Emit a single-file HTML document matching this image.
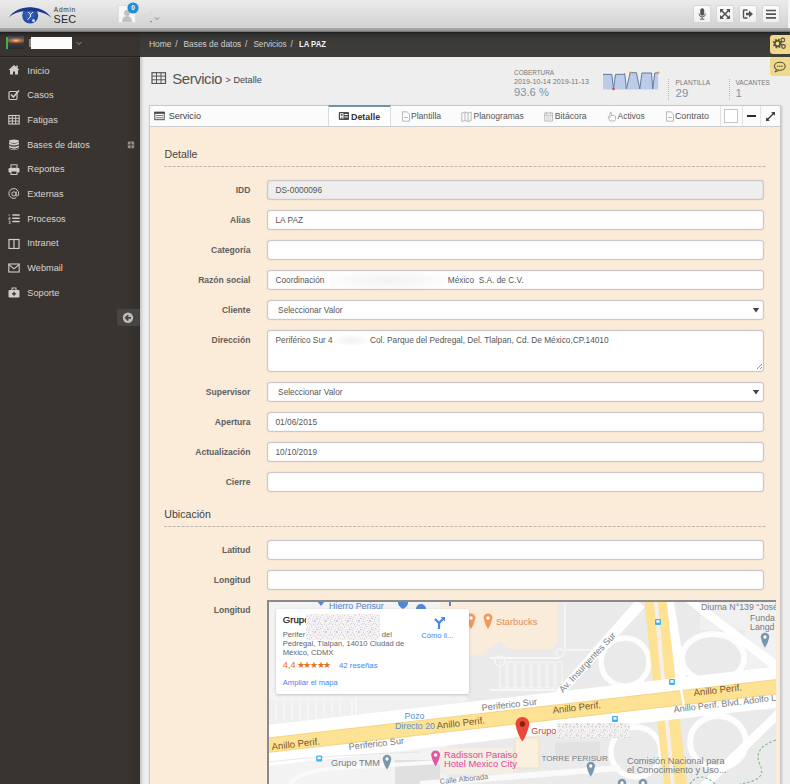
<!DOCTYPE html>
<html><head><meta charset="utf-8"><style>
*{box-sizing:border-box;margin:0;padding:0}
html,body{width:790px;height:784px;overflow:hidden;background:#ededed;font-family:"Liberation Sans",sans-serif;color:#555}
.a{position:absolute}
.t{position:absolute;white-space:pre}
</style></head><body>
<div class="a" style="left:140px;top:57px;width:650px;height:727px;background:#eeeeee"></div>
<div class="a" style="left:140px;top:57px;width:5px;height:727px;background:linear-gradient(to right,#c4c4c4,#e6e6e6 60%,#eeeeee)"></div>
<div class="a" style="left:0px;top:0px;width:790px;height:28px;background:linear-gradient(#ebebeb,#d1d1d1)"></div>
<div class="a" style="left:0px;top:28px;width:790px;height:4px;background:linear-gradient(#acacac,#979797 60%,#6a6a6a)"></div>
<svg class="a" style="left:5px;top:3px;" width="50" height="23" viewBox="0 0 50 23"><defs><radialGradient id="eg" cx="0.45" cy="0.4" r="0.6"><stop offset="0" stop-color="#3a6cc4"/><stop offset="1" stop-color="#1c42a0"/></radialGradient></defs><circle cx="25.2" cy="12.5" r="8" fill="url(#eg)"/><path d="M3.5 15 C12 0.5, 38 0.5, 46.7 15.3 C38 5.2, 12 5.2, 3.5 15Z" fill="#1b3a8e"/><path d="M23.5 9 l2 2.5 l2.5 -2.5 M25.5 11 v3 M25 14 l-2.5 3" stroke="#e6ecf7" stroke-width="1" fill="none"/><circle cx="28.5" cy="17.5" r="1.5" fill="#cfd9ee"/></svg>
<div class="t" style="left:53.80px;top:7.20px;font-size:6.5px;line-height:6.5px;color:#333;letter-spacing:0.75px">Admin</div>
<div class="t" style="left:53.50px;top:13.66px;font-size:10.8px;line-height:10.8px;color:#2a2a2a;letter-spacing:0.2px">SEC</div>
<div class="a" style="left:118px;top:5px;width:18px;height:18px;background:#f6f6f6;border:1px solid #dedede"></div>
<svg class="a" style="left:119px;top:6px;" width="16" height="16" viewBox="0 0 16 16"><circle cx="8" cy="7" r="3" fill="#c9bfba"/><path d="M3 16 Q3 10 8 10 Q13 10 13 16Z" fill="#c9bfba"/></svg>
<svg class="a" style="left:127px;top:2px;" width="12" height="12" viewBox="0 0 12 12"><circle cx="6" cy="6" r="5.6" fill="#1c8fd9"/><text x="6" y="8.3" font-size="6.5" font-weight="bold" text-anchor="middle" fill="#fff" font-family="Liberation Sans">0</text></svg>
<svg class="a" style="left:146px;top:5px;" width="16" height="20" viewBox="0 0 16 20"><circle cx="5" cy="16.5" r="0.7" fill="#666"/><path d="M9 12.5 l2 2 l2 -2" stroke="#777" stroke-width="1" fill="none"/><circle cx="5" cy="6" r="0.5" fill="#bbb"/><circle cx="5" cy="9" r="0.5" fill="#bbb"/></svg>
<div class="a" style="left:693px;top:5px;width:18px;height:18px;background:linear-gradient(#fbfbfb,#efefef);border:1px solid #d6d6d6;border-radius:2px"></div>
<div class="a" style="left:716px;top:5px;width:18px;height:18px;background:linear-gradient(#fbfbfb,#efefef);border:1px solid #d6d6d6;border-radius:2px"></div>
<div class="a" style="left:739px;top:5px;width:18px;height:18px;background:linear-gradient(#fbfbfb,#efefef);border:1px solid #d6d6d6;border-radius:2px"></div>
<div class="a" style="left:762px;top:5px;width:18px;height:18px;background:linear-gradient(#fbfbfb,#efefef);border:1px solid #d6d6d6;border-radius:2px"></div>
<svg class="a" style="left:693px;top:5px;" width="18" height="18" viewBox="0 0 18 18"><rect x="7.2" y="3.2" width="4" height="7.5" rx="2" fill="#555"/><path d="M6 8.5 Q6 12 9.2 12 Q12.4 12 12.4 8.5" stroke="#555" stroke-width="0.9" fill="none"/><path d="M9.2 12 v2 M7 14.2 h4.4" stroke="#555" stroke-width="0.9"/></svg>
<svg class="a" style="left:716px;top:5px;" width="18" height="18" viewBox="0 0 18 18"><g stroke="#555" stroke-width="1.6" fill="none"><path d="M5 5 L13 13 M13 5 L5 13"/></g><g fill="#555"><path d="M4 4 h4 l-4 4z M14 4 v4 l-4 -4z M4 14 v-4 l4 4z M14 14 h-4 l4 -4z"/></g></svg>
<svg class="a" style="left:739px;top:5px;" width="18" height="18" viewBox="0 0 18 18"><path d="M8.5 5 H5.2 Q4.5 5 4.5 5.7 V12.3 Q4.5 13 5.2 13 H8.5" stroke="#555" stroke-width="1.4" fill="none"/><path d="M7 7.8 H10 V5.6 L14 9 L10 12.4 V10.2 H7Z" fill="#555"/></svg>
<svg class="a" style="left:762px;top:5px;" width="18" height="18" viewBox="0 0 18 18"><g stroke="#555" stroke-width="1.7"><path d="M4 5.5 H14 M4 9.2 H14 M4 12.9 H14"/></g></svg>
<div class="a" style="left:788px;top:0px;width:2px;height:28px;background:#f4f4f4"></div>
<div class="a" style="left:0px;top:32px;width:140px;height:752px;background:#39342f"></div>
<div class="a" style="left:126px;top:57px;width:14px;height:727px;background:linear-gradient(to right,rgba(0,0,0,0),rgba(0,0,0,.10))"></div>
<div class="a" style="left:0px;top:32px;width:140px;height:25px;background:linear-gradient(#1e1c1b,#2f2b29 8%,#39342f 30%)"></div>
<div class="a" style="left:0px;top:56px;width:140px;height:1px;background:#242120"></div>
<div class="a" style="left:0px;top:57px;width:140px;height:1px;background:#3f3a37"></div>
<div class="a" style="left:6px;top:37px;width:2px;height:12px;background:#3cb340"></div>
<div class="a" style="left:8px;top:36px;width:16px;height:13px;background:radial-gradient(ellipse 9px 3px at 50% 35%,#ffd080,#d07a40 40%,rgba(60,60,70,0) 100%),linear-gradient(#3d4252,#6a5a58 35%,#3a3a40 60%,#2a2a2e)"></div>
<div class="a" style="left:31px;top:37px;width:41px;height:11.5px;background:#fcfcfc"></div>
<div class="a" style="left:29px;top:39px;width:2px;height:8px;background:#8a8684"></div>
<svg class="a" style="left:75px;top:39px;" width="8" height="8" viewBox="0 0 8 8"><path d="M1.5 3 l2.5 2.5 l2.5 -2.5" stroke="#9a9592" stroke-width="1" fill="none"/></svg>
<div class="t" style="left:27.30px;top:65.66px;font-size:9.5px;line-height:9.5px;color:#d9d5d1">Inicio</div>
<div class="t" style="left:27.30px;top:90.63px;font-size:9.3px;line-height:9.3px;color:#d9d5d1">Casos</div>
<div class="t" style="left:27.30px;top:115.63px;font-size:9.3px;line-height:9.3px;color:#d9d5d1">Fatigas</div>
<div class="t" style="left:27.30px;top:140.64px;font-size:9.05px;line-height:9.05px;color:#d9d5d1">Bases de datos</div>
<div class="t" style="left:27.30px;top:165.31px;font-size:9.2px;line-height:9.2px;color:#d9d5d1">Reportes</div>
<div class="t" style="left:27.30px;top:189.81px;font-size:9.2px;line-height:9.2px;color:#d9d5d1">Externas</div>
<div class="t" style="left:27.30px;top:214.51px;font-size:9.2px;line-height:9.2px;color:#d9d5d1">Procesos</div>
<div class="t" style="left:27.30px;top:239.31px;font-size:9.2px;line-height:9.2px;color:#d9d5d1">Intranet</div>
<div class="t" style="left:27.30px;top:263.71px;font-size:9.2px;line-height:9.2px;color:#d9d5d1">Webmail</div>
<div class="t" style="left:27.30px;top:288.51px;font-size:9.2px;line-height:9.2px;color:#d9d5d1">Soporte</div>
<svg class="a" style="left:8px;top:64.2px;" width="12" height="11" viewBox="0 0 12 11"><path d="M6 1 L0.5 6 H2 V10.5 H5 V7.5 H7 V10.5 H10 V6 H11.5Z" fill="#d0ccc8"/><rect x="8.3" y="1.5" width="1.5" height="3" fill="#d0ccc8"/></svg>
<svg class="a" style="left:8px;top:89px;" width="12" height="11" viewBox="0 0 12 11"><rect x="1" y="2.5" width="8" height="8" rx="1.2" stroke="#d0ccc8" stroke-width="1.2" fill="none"/><path d="M3 5.5 L5.3 8 L11 1.5" stroke="#d0ccc8" stroke-width="1.6" fill="none"/></svg>
<svg class="a" style="left:8px;top:114px;" width="12" height="11" viewBox="0 0 12 11"><rect x="0.8" y="1.5" width="10.4" height="8.5" stroke="#d0ccc8" stroke-width="1.1" fill="none"/><path d="M0.8 4.3 H11.2 M0.8 7.1 H11.2 M4.3 1.5 V10 M7.7 1.5 V10" stroke="#d0ccc8" stroke-width="1"/></svg>
<svg class="a" style="left:8px;top:138.8px;" width="12" height="11" viewBox="0 0 12 11"><ellipse cx="6" cy="2.2" rx="5" ry="1.8" fill="#d0ccc8"/><path d="M1 3.3 Q6 6 11 3.3 V5.2 Q6 7.9 1 5.2Z M1 6.4 Q6 9.1 11 6.4 V8.3 Q6 11 1 8.3Z" fill="#d0ccc8"/><path d="M1 9.2 Q6 12 11 9.2 V9.8 Q6 12.4 1 9.8Z" fill="#d0ccc8"/></svg>
<svg class="a" style="left:8px;top:163.6px;" width="12" height="11" viewBox="0 0 12 11"><rect x="3" y="0.8" width="6" height="3.5" stroke="#d0ccc8" stroke-width="1" fill="none"/><rect x="0.5" y="4" width="11" height="4.5" rx="1" fill="#d0ccc8"/><rect x="3" y="7" width="6" height="3.5" fill="#37322f" stroke="#d0ccc8" stroke-width="1"/></svg>
<svg class="a" style="left:8px;top:188.1px;" width="12" height="11" viewBox="0 0 12 11"><path d="M8.2 9.6 Q6.8 10.4 5.8 10.4 A4.9 4.9 0 1 1 10.7 5.5 Q10.7 8 9 8 Q7.9 8 8 6.8 L8.3 3.6" stroke="#d0ccc8" stroke-width="1" fill="none"/><circle cx="5.9" cy="5.9" r="2.1" stroke="#d0ccc8" stroke-width="1" fill="none"/></svg>
<svg class="a" style="left:8px;top:212.8px;" width="12" height="11" viewBox="0 0 12 11"><path d="M4.3 2 H11.7 M4.3 5.3 H11.7 M4.3 8.6 H11.7" stroke="#d0ccc8" stroke-width="1.5"/><path d="M1.2 1 V3 M0.7 4.6 H2.2 V5.5 H0.7 V6.5 H2.2 M0.7 8 H2.2 V10.5 H0.7 M0.7 9.2 H2.2" stroke="#d0ccc8" stroke-width="0.6" fill="none"/></svg>
<svg class="a" style="left:8px;top:237.6px;" width="12" height="11" viewBox="0 0 12 11"><rect x="1" y="1.5" width="10" height="9" stroke="#d0ccc8" stroke-width="1.2" fill="none"/><path d="M6 1.5 V10.5" stroke="#d0ccc8" stroke-width="1.2"/></svg>
<svg class="a" style="left:8px;top:262px;" width="12" height="11" viewBox="0 0 12 11"><rect x="0.8" y="2" width="10.4" height="8" stroke="#d0ccc8" stroke-width="1.1" fill="none"/><path d="M0.8 2.5 L6 6.8 L11.2 2.5" stroke="#d0ccc8" stroke-width="1.1" fill="none"/></svg>
<svg class="a" style="left:8px;top:286.8px;" width="12" height="11" viewBox="0 0 12 11"><rect x="0.5" y="3" width="11" height="7.5" rx="1" fill="#d0ccc8"/><rect x="4" y="1" width="4" height="2.5" stroke="#d0ccc8" stroke-width="1" fill="none"/><path d="M6 4.8 V8.8 M4 6.8 H8" stroke="#37322f" stroke-width="1.3"/></svg>
<svg class="a" style="left:127px;top:141px;" width="8" height="8" viewBox="0 0 8 8"><rect x="0.8" y="0.6" width="6.4" height="6.6" rx="1.2" fill="#95908b"/><path d="M4 1 V7 M1 3.9 H7" stroke="#3a3531" stroke-width="0.9"/></svg>
<div class="a" style="left:117px;top:309px;width:23px;height:17px;background:#464544;border-radius:2px 0 0 2px"></div>
<svg class="a" style="left:121px;top:311px;" width="14" height="14" viewBox="0 0 14 14"><circle cx="7" cy="6.8" r="5.2" fill="#bdbcbb"/><path d="M10 6.8 H4.8 M7.3 4.3 L4.7 6.8 L7.3 9.3" stroke="#464544" stroke-width="1.7" fill="none"/></svg>
<div class="a" style="left:140px;top:32px;width:650px;height:25px;background:linear-gradient(#1f1f1f,#2f2f2f 8%,#3b3a39 30%,#3f3e3d)"></div>
<div class="t" style="left:148.90px;top:40.00px;font-size:8.5px;line-height:8.5px;color:#cfcfcf">Home</div>
<div class="t" style="left:175.20px;top:40.00px;font-size:8.5px;line-height:8.5px;color:#cfcfcf">/</div>
<div class="t" style="left:183.50px;top:40.11px;font-size:8.38px;line-height:8.38px;color:#cfcfcf">Bases de datos</div>
<div class="t" style="left:245.00px;top:40.00px;font-size:8.5px;line-height:8.5px;color:#cfcfcf">/</div>
<div class="t" style="left:253.40px;top:40.63px;font-size:8.23px;line-height:8.23px;color:#cfcfcf">Servicios</div>
<div class="t" style="left:290.50px;top:40.00px;font-size:8.5px;line-height:8.5px;color:#cfcfcf">/</div>
<div class="t" style="left:299.00px;top:39.44px;font-size:9.4px;line-height:9.4px;color:#f4f4f4;font-weight:bold;transform:scaleX(0.82);transform-origin:0 0">LA PAZ</div>
<div class="a" style="left:770px;top:35px;width:21px;height:19px;background:#efd98a;border-radius:3px 0 0 3px"></div>
<svg class="a" style="left:770px;top:35px;" width="20" height="19" viewBox="0 0 20 19"><circle cx="7.5" cy="8.5" r="3.3" stroke="#55534d" stroke-width="2.8" stroke-dasharray="1.5 1.1" fill="none"/><circle cx="7.5" cy="8.5" r="2.7" stroke="#55534d" stroke-width="1.6" fill="none"/><circle cx="12.8" cy="5" r="1.8" stroke="#55534d" stroke-width="1.2" fill="none"/><circle cx="13.5" cy="11.5" r="1.8" stroke="#55534d" stroke-width="1.2" fill="none"/></svg>
<div class="a" style="left:770px;top:57px;width:21px;height:19px;background:#efd98a;border-radius:3px 0 0 3px"></div>
<svg class="a" style="left:770px;top:57px;" width="20" height="19" viewBox="0 0 20 19"><ellipse cx="9.8" cy="9.3" rx="5.4" ry="4" stroke="#4f5048" stroke-width="1.1" fill="none"/><path d="M6.6 12.4 L5 15 L9 13.3" stroke="#4f5048" stroke-width="1" fill="#efd98a"/><circle cx="7.7" cy="9.3" r="0.75" fill="#4f5048"/><circle cx="9.8" cy="9.3" r="0.75" fill="#4f5048"/><circle cx="11.9" cy="9.3" r="0.75" fill="#4f5048"/></svg>
<svg class="a" style="left:151px;top:72px;" width="16" height="12" viewBox="0 0 16 12"><rect x="1" y="0.7" width="13.5" height="10.8" stroke="#555" stroke-width="1.2" fill="none"/><path d="M1 4.1 H14.5 M1 7.8 H14.5 M5.5 0.7 V11.5 M10 0.7 V11.5" stroke="#555" stroke-width="1"/></svg>
<div class="t" style="left:172.20px;top:70.90px;font-size:15px;line-height:15px;color:#555;letter-spacing:-0.45px">Servicio</div>
<div class="t" style="left:225.60px;top:75.70px;font-size:9.1px;line-height:9.1px;color:#444">&gt; Detalle</div>
<div class="t" style="left:514.10px;top:70.38px;font-size:6.4px;line-height:6.4px;color:#777">COBERTURA</div>
<div class="t" style="left:514.10px;top:78.82px;font-size:7.18px;line-height:7.18px;color:#777">2019-10-14 2019-11-13</div>
<div class="t" style="left:514.00px;top:87.29px;font-size:11.24px;line-height:11.24px;color:#7d93aa">93.6 %</div>
<svg class="a" style="left:598px;top:66px;" width="66" height="28" viewBox="0 0 66 28"><polygon points="5.0,8.4 13.8,8.4 15.5,23.0 17.5,8.4 25.0,8.4 26.7,7.5 28.4,23.0 32.2,6.7 38.4,6.7 41.8,23.0 43.9,7.0 53.5,7.0 54.7,23.0 56.8,7.0 60.2,6.7 60.2,23.4 5.0,23.4" fill="#bccbea"/><polyline points="5.0,8.4 13.8,8.4 15.5,23.0 17.5,8.4 25.0,8.4 26.7,7.5 28.4,23.0 32.2,6.7 38.4,6.7 41.8,23.0 43.9,7.0 53.5,7.0 54.7,23.0 56.8,7.0 60.2,6.7" stroke="#5d7f98" stroke-width="1" fill="none"/><circle cx="15.5" cy="23" r="1.2" fill="#e8343a"/><circle cx="32.200000000000045" cy="6.700000000000003" r="1.2" fill="#f29a2e"/><circle cx="60.200000000000045" cy="6.700000000000003" r="1.2" fill="#f29a2e"/></svg>
<div class="a" style="left:668px;top:79px;width:0;height:21px;border-left:1px dotted #b8b8b8"></div>
<div class="a" style="left:729px;top:79px;width:0;height:21px;border-left:1px dotted #b8b8b8"></div>
<div class="t" style="left:675.60px;top:80.06px;font-size:6.55px;line-height:6.55px;color:#777">PLANTILLA</div>
<div class="t" style="left:675.60px;top:88.15px;font-size:11.4px;line-height:11.4px;color:#7d93aa">29</div>
<div class="t" style="left:735.40px;top:80.12px;font-size:6.47px;line-height:6.47px;color:#777">VACANTES</div>
<div class="t" style="left:735.40px;top:88.15px;font-size:11.4px;line-height:11.4px;color:#7d93aa">1</div>
<div class="a" style="left:149px;top:105px;width:632px;height:690px;background:#fbebd9;border:1px solid #c9c9c9;box-shadow:1px 1px 2px rgba(0,0,0,.18)"></div>
<div class="a" style="left:150px;top:106px;width:630px;height:21px;background:#fbfbfb;border-bottom:1px solid #cdcdcd"></div>
<svg class="a" style="left:153px;top:111px;" width="12" height="10" viewBox="0 0 12 10"><rect x="1.8" y="1.3" width="9.4" height="7.4" stroke="#505050" stroke-width="1" fill="none"/><rect x="1.3" y="0.8" width="10.4" height="2" fill="#444"/><path d="M3 4.6 H10 M3 6.8 H10" stroke="#666" stroke-width="0.9"/></svg>
<div class="t" style="left:168.70px;top:111.51px;font-size:9.08px;line-height:9.08px;color:#444">Servicio</div>
<div class="a" style="left:328px;top:105px;width:63px;height:21px;background:#fff;border-left:1px solid #dadada;border-right:1px solid #dadada;border-top:2px solid #7194a6"></div>
<svg class="a" style="left:338px;top:111px;" width="12" height="10" viewBox="0 0 12 10"><rect x="0.8" y="1" width="10.2" height="8" rx="0.8" fill="#4a4a4a"/><rect x="2" y="2.3" width="3.5" height="5.4" fill="#fff"/><rect x="6.5" y="3" width="3.3" height="1" fill="#fff"/><rect x="6.5" y="5.4" width="3.3" height="1" fill="#fff"/><circle cx="3.75" cy="4" r="1" fill="#4a4a4a"/><path d="M2.3 7.5 Q3.75 4.8 5.2 7.5Z" fill="#4a4a4a"/></svg>
<div class="t" style="left:351.00px;top:112.59px;font-size:8.87px;line-height:8.87px;color:#333;font-weight:bold">Detalle</div>
<svg class="a" style="left:400.5px;top:110.5px;" width="10" height="11" viewBox="0 0 10 11"><path d="M1.5 0.8 H6 L8.5 3.3 V10.2 H1.5Z" stroke="#aaa" stroke-width="0.8" fill="none"/><path d="M3 6.5 H7" stroke="#aaa" stroke-width="0.8"/></svg>
<div class="t" style="left:410.90px;top:112.28px;font-size:8.65px;line-height:8.65px;color:#555">Plantilla</div>
<svg class="a" style="left:460.5px;top:110.5px;" width="12" height="11" viewBox="0 0 12 11"><path d="M0.8 2 L4 1 L7 2 L10.2 1 V9.5 L7 10.5 L4 9.5 L0.8 10.5Z" stroke="#aaa" stroke-width="0.8" fill="none"/><path d="M4 1 V9.5 M7 2 V10.5" stroke="#aaa" stroke-width="0.8"/></svg>
<div class="t" style="left:473.50px;top:112.37px;font-size:8.54px;line-height:8.54px;color:#555">Planogramas</div>
<svg class="a" style="left:544px;top:110.5px;" width="10" height="11" viewBox="0 0 10 11"><rect x="0.8" y="2" width="7.6" height="8" stroke="#aaa" stroke-width="0.8" fill="none"/><path d="M0.8 4.2 H8.4 M2.7 0.8 V2.8 M6.5 0.8 V2.8" stroke="#aaa" stroke-width="0.8"/><path d="M2 6 H7.4 M2 8 H7.4" stroke="#aaa" stroke-width="0.6"/></svg>
<div class="t" style="left:554.80px;top:112.24px;font-size:8.7px;line-height:8.7px;color:#555">Bitácora</div>
<svg class="a" style="left:606.5px;top:110.5px;" width="10" height="11" viewBox="0 0 10 11"><path d="M3 10 L1 6 Q1.2 5 2.3 5.8 L3 6.6 V1.5 Q3.8 0.7 4.5 1.5 V4.5 H7.5 Q8.5 4.7 8.5 6 V8.5 L7.5 10Z" stroke="#aaa" stroke-width="0.8" fill="none"/></svg>
<div class="t" style="left:617.50px;top:112.43px;font-size:8.47px;line-height:8.47px;color:#555">Activos</div>
<svg class="a" style="left:664.5px;top:110.5px;" width="10" height="11" viewBox="0 0 10 11"><path d="M1.5 0.8 H6 L8.5 3.3 V10.2 H1.5Z" stroke="#aaa" stroke-width="0.8" fill="none"/><path d="M3 6.5 H7" stroke="#aaa" stroke-width="0.8"/></svg>
<div class="t" style="left:674.90px;top:112.07px;font-size:8.89px;line-height:8.89px;color:#555">Contrato</div>
<div class="a" style="left:719.5px;top:106px;width:1px;height:20px;background:#e3e3e3"></div>
<div class="a" style="left:741.5px;top:106px;width:1px;height:20px;background:#e3e3e3"></div>
<div class="a" style="left:760px;top:106px;width:1px;height:20px;background:#e3e3e3"></div>
<div class="a" style="left:723.5px;top:109px;width:14px;height:14px;background:#fff;border:1px solid #c6c6c6"></div>
<div class="a" style="left:747px;top:114.5px;width:9px;height:2.2px;background:#2b2b2b"></div>
<svg class="a" style="left:764px;top:110px;" width="13" height="13" viewBox="0 0 13 13"><path d="M3 10 L10 3" stroke="#333" stroke-width="1.2"/><path d="M2 11 L2.3 7.2 L5.8 10.7Z M11 2 L10.7 5.8 L7.2 2.3Z" fill="#333"/></svg>
<div class="t" style="left:164.50px;top:148.85px;font-size:10.57px;line-height:10.57px;color:#444">Detalle</div>
<svg class="a" style="left:164px;top:166px;" width="602" height="1" viewBox="0 0 602 1"><path d="M0 0.5 H602" stroke="#c2b6aa" stroke-width="1" stroke-dasharray="3 1.4"/></svg>
<div class="t" style="left:-49.60px;width:300px;text-align:right;top:185.96px;font-size:8.55px;line-height:8.55px;color:#606060;font-weight:bold">IDD</div>
<div class="a" style="left:267px;top:180px;width:497px;height:20px;background:#eeeeee;border:1px solid #c9c9c9;border-radius:3px;box-shadow:inset 0 0 2px rgba(0,0,0,.13),0 0 1.5px rgba(0,0,0,.12)"></div>
<div class="t" style="left:275.50px;top:185.97px;font-size:8.3px;line-height:8.3px;color:#555">DS-0000096</div>
<div class="t" style="left:-49.60px;width:300px;text-align:right;top:215.96px;font-size:8.55px;line-height:8.55px;color:#606060;font-weight:bold">Alias</div>
<div class="a" style="left:267px;top:210px;width:497px;height:20px;background:#fff;border:1px solid #c9c9c9;border-radius:3px;box-shadow:inset 0 0 2px rgba(0,0,0,.13),0 0 1.5px rgba(0,0,0,.12)"></div>
<div class="t" style="left:275.50px;top:215.97px;font-size:8.3px;line-height:8.3px;color:#555">LA PAZ</div>
<div class="t" style="left:-49.60px;width:300px;text-align:right;top:245.96px;font-size:8.55px;line-height:8.55px;color:#606060;font-weight:bold">Categoría</div>
<div class="a" style="left:267px;top:240px;width:497px;height:20px;background:#fff;border:1px solid #c9c9c9;border-radius:3px;box-shadow:inset 0 0 2px rgba(0,0,0,.13),0 0 1.5px rgba(0,0,0,.12)"></div>
<div class="t" style="left:-49.60px;width:300px;text-align:right;top:275.96px;font-size:8.55px;line-height:8.55px;color:#606060;font-weight:bold">Razón social</div>
<div class="a" style="left:267px;top:270px;width:497px;height:20px;background:#fff;border:1px solid #c9c9c9;border-radius:3px;box-shadow:inset 0 0 2px rgba(0,0,0,.13),0 0 1.5px rgba(0,0,0,.12)"></div>
<div class="t" style="left:275.50px;top:275.97px;font-size:8.3px;line-height:8.3px;color:#555">Coordinación</div>
<div class="t" style="left:-49.60px;width:300px;text-align:right;top:305.96px;font-size:8.55px;line-height:8.55px;color:#606060;font-weight:bold">Cliente</div>
<div class="a" style="left:267px;top:300px;width:497px;height:20px;background:#fff;border:1px solid #c9c9c9;border-radius:3px;box-shadow:inset 0 0 2px rgba(0,0,0,.13),0 0 1.5px rgba(0,0,0,.12)"></div>
<div class="t" style="left:278.10px;top:305.97px;font-size:8.3px;line-height:8.3px;color:#555">Seleccionar Valor</div>
<svg class="a" style="left:752px;top:306px;" width="8" height="8" viewBox="0 0 8 8"><path d="M0.8 2 H7.2 L4 6.5Z" fill="#444"/></svg>
<div class="t" style="left:-49.60px;width:300px;text-align:right;top:335.56px;font-size:8.55px;line-height:8.55px;color:#606060;font-weight:bold">Dirección</div>
<div class="a" style="left:267px;top:329.5px;width:497px;height:42.5px;background:#fff;border:1px solid #c9c9c9;border-radius:3px;box-shadow:inset 0 0 2px rgba(0,0,0,.13),0 0 1.5px rgba(0,0,0,.12)"></div>
<div class="t" style="left:275.50px;top:335.87px;font-size:8.3px;line-height:8.3px;color:#555">Periférico Sur 4</div>
<div class="t" style="left:370.00px;top:335.87px;font-size:8.3px;line-height:8.3px;color:#555">Col. Parque del Pedregal, Del. Tlalpan, Cd. De México,CP.14010</div>
<svg class="a" style="left:755px;top:362px;" width="8" height="8" viewBox="0 0 8 8"><path d="M7 2 L2 7 M7 5 L5 7" stroke="#777" stroke-width="0.8"/></svg>
<div class="t" style="left:447.80px;top:276.07px;font-size:8.3px;line-height:8.3px;color:#555">México  S.A. de C.V.</div>
<div class="a" style="left:330px;top:272px;width:117px;height:17px;background:radial-gradient(ellipse at 50% 50%,rgba(200,190,195,.22),rgba(220,215,215,.08) 70%,rgba(255,255,255,0))"></div>
<div class="a" style="left:333px;top:335px;width:37px;height:11px;background:radial-gradient(ellipse at 50% 50%,rgba(200,190,195,.25),rgba(255,255,255,0) 75%)"></div>
<div class="t" style="left:-49.60px;width:300px;text-align:right;top:387.96px;font-size:8.55px;line-height:8.55px;color:#606060;font-weight:bold">Supervisor</div>
<div class="a" style="left:267px;top:382px;width:497px;height:20px;background:#fff;border:1px solid #c9c9c9;border-radius:3px;box-shadow:inset 0 0 2px rgba(0,0,0,.13),0 0 1.5px rgba(0,0,0,.12)"></div>
<div class="t" style="left:278.10px;top:387.97px;font-size:8.3px;line-height:8.3px;color:#555">Seleccionar Valor</div>
<svg class="a" style="left:752px;top:388px;" width="8" height="8" viewBox="0 0 8 8"><path d="M0.8 2 H7.2 L4 6.5Z" fill="#444"/></svg>
<div class="t" style="left:-49.60px;width:300px;text-align:right;top:417.76px;font-size:8.55px;line-height:8.55px;color:#606060;font-weight:bold">Apertura</div>
<div class="a" style="left:267px;top:411.8px;width:497px;height:20px;background:#fff;border:1px solid #c9c9c9;border-radius:3px;box-shadow:inset 0 0 2px rgba(0,0,0,.13),0 0 1.5px rgba(0,0,0,.12)"></div>
<div class="t" style="left:275.50px;top:417.77px;font-size:8.3px;line-height:8.3px;color:#555">01/06/2015</div>
<div class="t" style="left:-49.60px;width:300px;text-align:right;top:447.76px;font-size:8.55px;line-height:8.55px;color:#606060;font-weight:bold">Actualización</div>
<div class="a" style="left:267px;top:441.8px;width:497px;height:20px;background:#fff;border:1px solid #c9c9c9;border-radius:3px;box-shadow:inset 0 0 2px rgba(0,0,0,.13),0 0 1.5px rgba(0,0,0,.12)"></div>
<div class="t" style="left:275.50px;top:447.77px;font-size:8.3px;line-height:8.3px;color:#555">10/10/2019</div>
<div class="t" style="left:-49.60px;width:300px;text-align:right;top:477.96px;font-size:8.55px;line-height:8.55px;color:#606060;font-weight:bold">Cierre</div>
<div class="a" style="left:267px;top:472px;width:497px;height:20px;background:#fff;border:1px solid #c9c9c9;border-radius:3px;box-shadow:inset 0 0 2px rgba(0,0,0,.13),0 0 1.5px rgba(0,0,0,.12)"></div>
<div class="t" style="left:164.30px;top:509.03px;font-size:10.6px;line-height:10.6px;color:#444">Ubicación</div>
<svg class="a" style="left:164px;top:526px;" width="602" height="1" viewBox="0 0 602 1"><path d="M0 0.5 H602" stroke="#c2b6aa" stroke-width="1" stroke-dasharray="3 1.4"/></svg>
<div class="t" style="left:-49.60px;width:300px;text-align:right;top:546.16px;font-size:8.55px;line-height:8.55px;color:#606060;font-weight:bold">Latitud</div>
<div class="a" style="left:267px;top:540.2px;width:497px;height:20px;background:#fff;border:1px solid #c9c9c9;border-radius:3px;box-shadow:inset 0 0 2px rgba(0,0,0,.13),0 0 1.5px rgba(0,0,0,.12)"></div>
<div class="t" style="left:-49.60px;width:300px;text-align:right;top:575.96px;font-size:8.55px;line-height:8.55px;color:#606060;font-weight:bold">Longitud</div>
<div class="a" style="left:267px;top:570px;width:497px;height:20px;background:#fff;border:1px solid #c9c9c9;border-radius:3px;box-shadow:inset 0 0 2px rgba(0,0,0,.13),0 0 1.5px rgba(0,0,0,.12)"></div>
<div class="t" style="left:-49.60px;width:300px;text-align:right;top:605.76px;font-size:8.55px;line-height:8.55px;color:#606060;font-weight:bold">Longitud</div>
<svg class="a" style="left:267px;top:600px" width="509" height="184" viewBox="267 600 509 184"><rect x="267" y="600" width="509" height="184" fill="#eaeaea"/><rect x="267" y="694" width="200" height="40" fill="#f0f0f0"/><rect x="267" y="745" width="180" height="39" fill="#f3f3f3"/><rect x="267" y="600" width="200" height="100" fill="#f3f3f3"/><rect x="745" y="600" width="31" height="110" fill="#f1f1f1"/><rect x="700" y="600" width="50" height="30" fill="#f0f0f0"/><polygon points="440.0,600.0 557.0,600.0 557.0,643.0 552.0,649.0 508.0,649.0 500.0,641.0 482.0,655.0 440.0,657.0" fill="#faecdb" /><rect x="500" y="662" width="6" height="26" rx="1" fill="none" stroke="#f6f6f6" stroke-width="1.2"/><rect x="508" y="662" width="6" height="26" rx="1" fill="none" stroke="#f6f6f6" stroke-width="1.2"/><rect x="516" y="662" width="6" height="26" rx="1" fill="none" stroke="#f6f6f6" stroke-width="1.2"/><rect x="524" y="662" width="6" height="26" rx="1" fill="none" stroke="#f6f6f6" stroke-width="1.2"/><rect x="532" y="662" width="6" height="26" rx="1" fill="none" stroke="#f6f6f6" stroke-width="1.2"/><rect x="540" y="662" width="6" height="26" rx="1" fill="none" stroke="#f6f6f6" stroke-width="1.2"/><rect x="548" y="662" width="6" height="26" rx="1" fill="none" stroke="#f6f6f6" stroke-width="1.2"/><rect x="556" y="662" width="6" height="26" rx="1" fill="none" stroke="#f6f6f6" stroke-width="1.2"/><path d="M490 658 H560 M490 690 H555" stroke="#f7f7f7" stroke-width="2" fill="none"/><circle cx="500" cy="661" r="5" fill="none" stroke="#f5f5f5" stroke-width="1.5"/><circle cx="560" cy="653" r="4" fill="none" stroke="#f5f5f5" stroke-width="1.5"/><path d="M565 600 V650 H600" stroke="#f6f6f6" stroke-width="1.5" fill="none"/><path d="M276 696 V720" stroke="#f6f6f6" stroke-width="1.3"/><path d="M284 696 V720" stroke="#f6f6f6" stroke-width="1.3"/><path d="M292 696 V720" stroke="#f6f6f6" stroke-width="1.3"/><path d="M300 696 V720" stroke="#f6f6f6" stroke-width="1.3"/><path d="M308 696 V720" stroke="#f6f6f6" stroke-width="1.3"/><path d="M316 696 V720" stroke="#f6f6f6" stroke-width="1.3"/><path d="M324 696 V720" stroke="#f6f6f6" stroke-width="1.3"/><path d="M332 696 V720" stroke="#f6f6f6" stroke-width="1.3"/><path d="M340 696 V720" stroke="#f6f6f6" stroke-width="1.3"/><path d="M267 694 H470 M356 694 V724 M352 700 V724" stroke="#f7f7f7" stroke-width="2" fill="none"/><polygon points="555.0,692.0 566.0,692.0 645.0,607.0 636.0,600.0" fill="#ffffff" /><circle cx="625" cy="662" r="24" fill="none" stroke="#fdfdfd" stroke-width="5.5"/><ellipse cx="713" cy="658" rx="31" ry="24" fill="none" stroke="#fdfdfd" stroke-width="6"/><circle cx="636" cy="752" r="25" fill="none" stroke="#fdfdfd" stroke-width="5.5"/><ellipse cx="718" cy="742" rx="28" ry="26" fill="none" stroke="#fdfdfd" stroke-width="6"/><polygon points="683.0,600.0 696.0,600.0 776.0,660.0 776.0,672.0" fill="#ffffff" /><polygon points="700.0,784.0 712.0,784.0 776.0,722.0 776.0,710.0" fill="#ffffff" /><polygon points="644.2,600.0 653.8,600.0 671.0,784.0 664.0,784.0" fill="#fde293" /><polygon points="657.6,600.0 666.6,600.0 687.0,784.0 674.7,784.0" fill="#fde293" /><polygon points="653.8,600.0 657.6,600.0 674.7,784.0 671.0,784.0" fill="#f7eeea" /><polygon points="666.6,600.0 673.6,600.0 690.0,700.0 678.0,700.0" fill="#ffffff" /><polygon points="267.0,725.1 776.0,666.6 776.0,679.6 267.0,738.1" fill="#ffffff" /><polygon points="267.0,752.6 776.0,694.1 776.0,707.6 267.0,766.1" fill="#ffffff" /><polygon points="267.0,738.1 776.0,679.6 776.0,694.1 267.0,752.6" fill="#fde293" /><path d="M267 738.1 L776 679.6" stroke="#f2cf79" stroke-width="0.8"/><path d="M267 752.6 L776 694.1" stroke="#f2cf79" stroke-width="0.8"/><path d="M681 689.5 L684 705.7" stroke="#fff" stroke-width="2.5"/><rect x="515" y="738" width="24" height="30" fill="#fbf0dd" stroke="#efdcb5" stroke-width="0.8"/><rect x="440" y="748" width="73" height="26" fill="#f3eee6"/><rect x="555" y="742" width="45" height="14" fill="#e2e2e2"/><rect x="395" y="760" width="45" height="24" fill="#e0e0e0"/><path d="M267 762 Q330 755 420 752" fill="none" stroke="#e2e2e2" stroke-width="0.8"/><path d="M290 784 Q300 770 340 768 L440 762" fill="none" stroke="#fafafa" stroke-width="4"/><path d="M420 784 L620 768" stroke="#fafafa" stroke-width="6"/><path d="M776 740 Q752 748 760 765 Q768 780 740 784 M715 784 Q700 770 690 784" fill="none" stroke="#6ec07a" stroke-width="1.1" stroke-dasharray="2.5 2"/><text x="331" y="766" font-size="9.2" fill="#767b80" font-weight="normal" font-family="Liberation Sans">Grupo TMM</text><text x="444" y="757.7" font-size="9.4" fill="#e0489b" font-weight="normal" font-family="Liberation Sans">Radisson Paraiso</text><text x="444" y="767" font-size="9.4" fill="#e0489b" font-weight="normal" font-family="Liberation Sans">Hotel Mexico City</text><text x="541.4" y="761.3" font-size="8.1" fill="#767b80" font-weight="normal" font-family="Liberation Sans">TORRE PERISUR</text><text x="627" y="764" font-size="9.2" fill="#767b80" font-weight="normal" font-family="Liberation Sans">Comisión Nacional para</text><text x="627" y="773" font-size="9.2" fill="#767b80" font-weight="normal" font-family="Liberation Sans">el Conocimiento y Uso...</text><text x="701" y="609.5" font-size="8.8" fill="#767b80" font-weight="normal" font-family="Liberation Sans">Diurna N°139 “José</text><text x="750" y="621" font-size="8.8" fill="#767b80" font-weight="normal" font-family="Liberation Sans">Funda</text><text x="750" y="630" font-size="8.8" fill="#767b80" font-weight="normal" font-family="Liberation Sans">Langd</text><text x="531.3" y="733.7" font-size="9" fill="#d93a2f" font-weight="normal" font-family="Liberation Sans">Grupo</text><text x="496" y="625" font-size="9.3" fill="#e58a56" font-weight="normal" font-family="Liberation Sans">Starbucks</text><text x="329" y="608.5" font-size="8.9" fill="#4f86d6" font-weight="normal" font-family="Liberation Sans">Hierro Perisur</text><path d="M317 601 H325 L321 606Z" fill="#4f86d6"/><path d="M398 600 H408 V603 Q408 606 403 609 Q398 606 398 603Z" fill="#4f86d6"/><circle cx="421" cy="609" r="5" fill="#4f86d6"/><path d="M450 600 V606" stroke="#4f86d6" stroke-width="2"/><text x="404.4" y="719.2" font-size="8.8" fill="#5b8fd8" font-weight="normal" font-family="Liberation Sans">Pozo</text><text x="394.9" y="729" font-size="8.8" fill="#5b8fd8" font-weight="normal" font-family="Liberation Sans">Directo 20</text><text x="272" y="750" font-size="9.6" fill="#7d5a2e" font-weight="normal" transform="rotate(-6.6 272 750)" font-family="Liberation Sans">Anillo Perif.</text><text x="437" y="729" font-size="9.6" fill="#7d5a2e" font-weight="normal" transform="rotate(-6.6 437 729)" font-family="Liberation Sans">Anillo Perif.</text><text x="553" y="713.5" font-size="9.6" fill="#7d5a2e" font-weight="normal" transform="rotate(-6.6 553 713.5)" font-family="Liberation Sans">Anillo Perif.</text><text x="694" y="696" font-size="9.6" fill="#7d5a2e" font-weight="normal" transform="rotate(-6.6 694 696)" font-family="Liberation Sans">Anillo Perif.</text><text x="349" y="750" font-size="9.2" fill="#767b80" font-weight="normal" transform="rotate(-6.6 349 750)" font-family="Liberation Sans">Periferico Sur</text><text x="482" y="711" font-size="9.2" fill="#767b80" font-weight="normal" transform="rotate(-6.6 482 711)" font-family="Liberation Sans">Periferico Sur</text><text x="674" y="712.5" font-size="9" fill="#767b80" font-weight="normal" transform="rotate(-6.6 674 712.5)" font-family="Liberation Sans">Anillo Perif. Blvd. Adolfo L</text><text x="563" y="693" font-size="9" fill="#767b80" font-weight="normal" transform="rotate(-47 563 693)" font-family="Liberation Sans">Av. Insurgentes Sur</text><text x="440" y="784" font-size="7.5" fill="#767b80" font-weight="normal" transform="rotate(-6 440 784)" font-family="Liberation Sans">Calle Alborada</text><path d="M515.4 724 A7 7 0 1 1 529.4 724 Q527.3 734.5 522.4 741.5 Q517.5 734.5 515.4 724Z" fill="#e8473a"/><circle cx="522.4" cy="724" r="2.66" fill="#8c1d15"/><path d="M382.7 759 A4.3 4.3 0 1 1 391.3 759 Q390.01 765.45 387 769.75 Q383.99 765.45 382.7 759Z" fill="#7a98ad"/><circle cx="387" cy="759" r="1.634" fill="#fff"/><path d="M760.7 637 A4.3 4.3 0 1 1 769.3 637 Q768.01 643.45 765 647.75 Q761.99 643.45 760.7 637Z" fill="#7a98ad"/><circle cx="765" cy="637" r="1.634" fill="#fff"/><path d="M586.5 766 A4.3 4.3 0 1 1 595.0999999999999 766 Q593.81 772.45 590.8 776.75 Q587.79 772.45 586.5 766Z" fill="#7a98ad"/><circle cx="590.8" cy="766" r="1.634" fill="#fff"/><path d="M483.5 618 A4.5 4.5 0 1 1 492.5 618 Q491.15 624.75 488 629.25 Q484.85 624.75 483.5 618Z" fill="#f29a5c"/><circle cx="488" cy="618" r="1.71" fill="#fff"/><path d="M466.5 618 A4.5 4.5 0 1 1 475.5 618 Q474.15 624.75 471 629.25 Q467.85 624.75 466.5 618Z" fill="#f29a5c"/><circle cx="471" cy="618" r="1.71" fill="#fff"/><path d="M431.1 755 A4.5 4.5 0 1 1 440.1 755 Q438.75 761.75 435.6 766.25 Q432.45000000000005 761.75 431.1 755Z" fill="#e8559f"/><circle cx="435.6" cy="755" r="1.71" fill="#fff"/><path d="M617.7 783 A4.3 4.3 0 1 1 626.3 783 Q625.01 789.45 622 793.75 Q618.99 789.45 617.7 783Z" fill="#7a98ad"/><circle cx="622" cy="783" r="1.634" fill="#fff"/><path d="M638.7 783 A4.3 4.3 0 1 1 647.3 783 Q646.01 789.45 643 793.75 Q639.99 789.45 638.7 783Z" fill="#7a98ad"/><circle cx="643" cy="783" r="1.634" fill="#fff"/><rect x="655" y="619" width="6" height="6" rx="1" fill="#3fb3f0"/><rect x="656.4" y="620.2" width="3.2" height="2.4" fill="#fff"/><rect x="669" y="679" width="6" height="6" rx="1" fill="#3fb3f0"/><rect x="670.4" y="680.2" width="3.2" height="2.4" fill="#fff"/><rect x="612" y="716" width="6" height="6" rx="1" fill="#3fb3f0"/><rect x="613.4" y="717.2" width="3.2" height="2.4" fill="#fff"/><rect x="316.2" y="755.6" width="6" height="6" rx="1" fill="#3fb3f0"/><rect x="317.59999999999997" y="756.8000000000001" width="3.2" height="2.4" fill="#fff"/><defs><pattern id="nz2" width="11" height="11" patternUnits="userSpaceOnUse"><rect width="11" height="11" fill="#f3f0f2"/><rect x="8" y="6" width="1" height="1" fill="#e3d3d3"/><rect x="5" y="8" width="1" height="1" fill="#e3d3d3"/><rect x="6" y="9" width="1" height="1" fill="#c9d7cf"/><rect x="5" y="10" width="1" height="1" fill="#d9c7d6"/><rect x="4" y="9" width="1" height="1" fill="#c8d0e0"/><rect x="2" y="5" width="1" height="1" fill="#e3d3d3"/><rect x="9" y="9" width="1" height="1" fill="#d9c7d6"/><rect x="10" y="3" width="1" height="1" fill="#c8d0e0"/><rect x="9" y="4" width="1" height="1" fill="#d6d0c0"/><rect x="1" y="1" width="1" height="1" fill="#cdc6de"/><rect x="10" y="7" width="1" height="1" fill="#d9c7d6"/><rect x="5" y="1" width="1" height="1" fill="#cdc6de"/><rect x="2" y="0" width="1" height="1" fill="#d6d0c0"/><rect x="6" y="6" width="1" height="1" fill="#e0d8c8"/><rect x="1" y="0" width="1" height="1" fill="#e3d3d3"/><rect x="9" y="0" width="1" height="1" fill="#cdc6de"/><rect x="9" y="5" width="1" height="1" fill="#e3d3d3"/><rect x="4" y="8" width="1" height="1" fill="#c9d7cf"/><rect x="0" y="4" width="1" height="1" fill="#d9c7d6"/><rect x="1" y="1" width="1" height="1" fill="#e3d3d3"/><rect x="8" y="0" width="1" height="1" fill="#c9d7cf"/><rect x="6" y="4" width="1" height="1" fill="#e3d3d3"/></pattern></defs><rect x="557" y="723" width="73" height="15" fill="url(#nz2)"/></svg>
<div class="a" style="left:267px;top:600px;width:509px;height:190px;border-top:2px solid #8a8a8a;border-left:2px solid #8a8a8a"></div>
<div class="a" style="left:275.7px;top:609px;width:193.5px;height:84.7px;background:#fff;box-shadow:0 1px 3px rgba(0,0,0,.22);border-radius:2px"></div>
<div class="t" style="left:282.80px;top:615.17px;font-size:9.6px;line-height:9.6px;color:#222;-webkit-text-stroke:0.25px #222">Grupo</div>
<svg class="a" style="left:306px;top:614px;" width="74" height="26" viewBox="0 0 74 26"><defs><pattern id="nz" width="11" height="11" patternUnits="userSpaceOnUse"><rect width="11" height="11" fill="#f5f2f5"/><rect x="3" y="9" width="1" height="1" fill="#e3d3d3"/><rect x="2" y="5" width="1" height="1" fill="#e3d3d3"/><rect x="7" y="10" width="1" height="1" fill="#e3d3d3"/><rect x="1" y="9" width="1" height="1" fill="#d9c7d6"/><rect x="7" y="4" width="1" height="1" fill="#e3d3d3"/><rect x="3" y="3" width="1" height="1" fill="#c8d0e0"/><rect x="7" y="8" width="1" height="1" fill="#e0d8c8"/><rect x="8" y="7" width="1" height="1" fill="#cdc6de"/><rect x="10" y="2" width="1" height="1" fill="#c9d7cf"/><rect x="10" y="2" width="1" height="1" fill="#e0d8c8"/><rect x="8" y="6" width="1" height="1" fill="#c8d0e0"/><rect x="0" y="10" width="1" height="1" fill="#e0d8c8"/><rect x="1" y="2" width="1" height="1" fill="#e0d8c8"/><rect x="9" y="0" width="1" height="1" fill="#d6d0c0"/><rect x="0" y="4" width="1" height="1" fill="#cdc6de"/><rect x="9" y="6" width="1" height="1" fill="#c8d0e0"/><rect x="6" y="6" width="1" height="1" fill="#c8d0e0"/><rect x="9" y="7" width="1" height="1" fill="#c9d7cf"/><rect x="5" y="1" width="1" height="1" fill="#d9c7d6"/><rect x="2" y="7" width="1" height="1" fill="#c9d7cf"/><rect x="4" y="10" width="1" height="1" fill="#cdc6de"/><rect x="10" y="4" width="1" height="1" fill="#cdc6de"/></pattern></defs><rect width="74" height="26" fill="url(#nz)"/></svg>
<div class="t" style="left:282.80px;top:630.57px;font-size:7.6px;line-height:7.6px;color:#5f6368">Perifer</div>
<div class="t" style="left:381.80px;top:630.57px;font-size:7.6px;line-height:7.6px;color:#5f6368">del</div>
<div class="t" style="left:282.80px;top:639.57px;font-size:7.6px;line-height:7.6px;color:#5f6368">Pedregal, Tlalpan, 14010 Ciudad de</div>
<div class="t" style="left:282.80px;top:649.17px;font-size:7.6px;line-height:7.6px;color:#5f6368">México, CDMX</div>
<div class="t" style="left:282.80px;top:660.81px;font-size:9.2px;line-height:9.2px;color:#e7711b">4,4</div>
<div class="t" style="left:296.50px;top:661.12px;font-size:8.6px;line-height:8.6px;color:#e7711b;letter-spacing:-1.3px">★★★★★</div>
<div class="t" style="left:339.00px;top:662.00px;font-size:7.8px;line-height:7.8px;color:#4285f4">42 reseñas</div>
<div class="t" style="left:282.80px;top:679.37px;font-size:7.6px;line-height:7.6px;color:#4285f4">Ampliar el mapa</div>
<div class="t" style="left:421.30px;top:632.47px;font-size:7.6px;line-height:7.6px;color:#4285f4">Cómo ll...</div>
<svg class="a" style="left:432px;top:616px;" width="15" height="14" viewBox="0 0 15 14"><path d="M7 13 V7 L3 3 M7 7 L11 3" stroke="#4285f4" stroke-width="2.2" fill="none"/><path d="M8.5 1 H13 V5.5Z" fill="#4285f4"/></svg>
</body></html>
